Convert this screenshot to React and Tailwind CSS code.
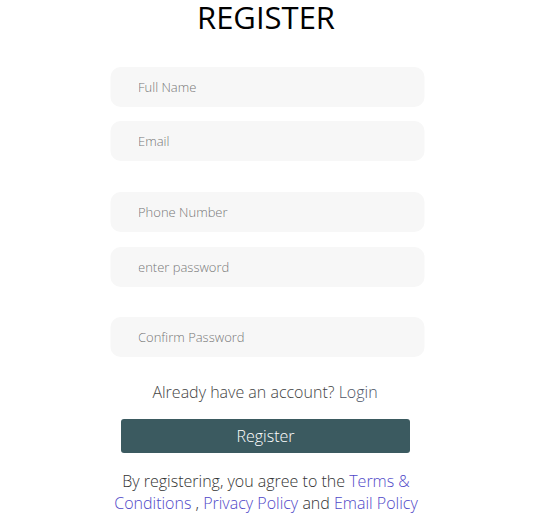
import React, { useState } from 'react';

const Field = ({ placeholder, type = 'text', value, onChange, className = '' }) => (
    <input
        type={type}
        placeholder={placeholder}
        value={value}
        onChange={(e) => onChange(e.target.value)}
        className={`block w-full h-10 rounded-[10px] bg-[#f7f7f7] pl-7 pr-4 text-[13px] font-light text-[#444] placeholder:text-[#777] outline-none ${className}`}
    />
);

const App = () => {
    const [form, setForm] = useState({ name: '', email: '', phone: '', password: '', confirm: '' });
    const set = (key) => (v) => setForm({ ...form, [key]: v });

    return (
        <div className="min-h-screen bg-white" style={{ fontFamily: '"Open Sans", "Liberation Sans", sans-serif' }}>
            <div className="mx-auto w-[314px] flex flex-col items-center translate-x-[0.5px]">
                <h1 className="text-[31px] leading-[34px] font-normal text-black -translate-x-[1px]">REGISTER</h1>

                <form className="w-full mt-[33px]" onSubmit={(e) => e.preventDefault()}>
                    <Field placeholder="Full Name" value={form.name} onChange={set('name')} />
                    <Field placeholder="Email" type="email" value={form.email} onChange={set('email')} className="mt-[14px]" />
                    <Field placeholder="Phone Number" value={form.phone} onChange={set('phone')} className="mt-[31px]" />
                    <Field placeholder="enter password" type="password" value={form.password} onChange={set('password')} className="mt-[15px]" />
                    <Field placeholder="Confirm Password" type="password" value={form.confirm} onChange={set('confirm')} className="mt-[30px]" />

                    <p className="mt-[23px] text-center text-base leading-6 font-light text-[#444] -translate-x-[2px]">
                        Already have an account? <a href="#" className="text-[#4d5466]">Login</a>
                    </p>

                    <button
                        type="submit"
                        className="block mx-auto mt-[15px] w-[289px] h-[34px] rounded-[3px] bg-[#3b5a60] text-white text-base font-light -translate-x-[1.5px]"
                    >
                        Register
                    </button>
                </form>

                <p className="mt-[17px] text-center text-base leading-[22px] font-light text-[#333] -translate-x-[1px]">
                    By registering, you agree to the <a href="#" className="text-[#5048c8]">Terms &amp; Conditions</a> , <a href="#" className="text-[#5048c8]">Privacy Policy</a> and <a href="#" className="text-[#5048c8]">Email Policy</a>
                </p>
            </div>
        </div>
    );
};

export default App;
